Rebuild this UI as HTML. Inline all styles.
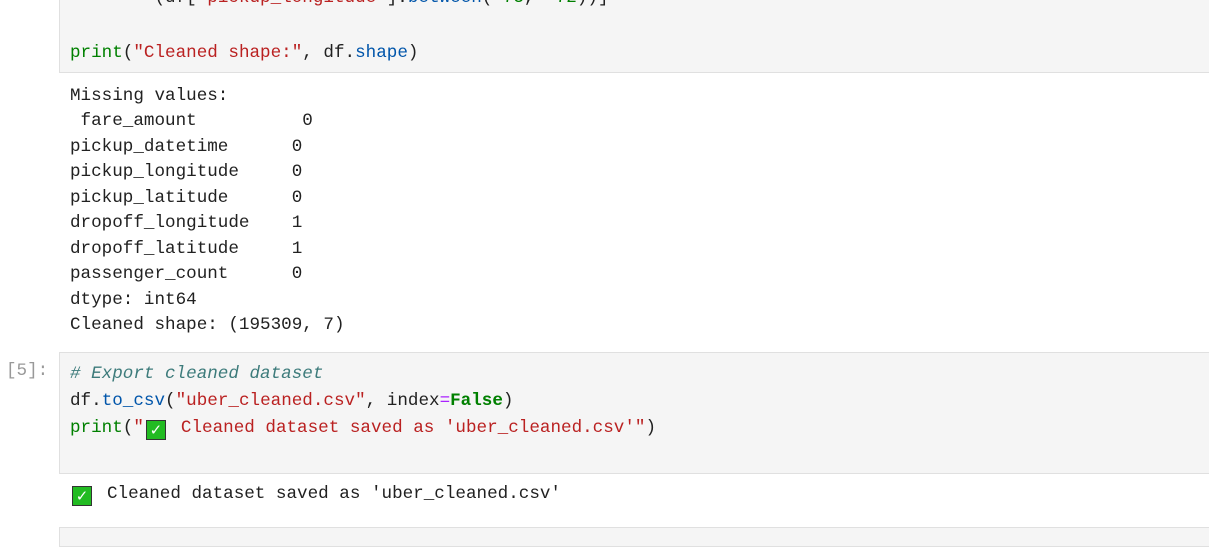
<!DOCTYPE html>
<html><head><style>
body{margin:0;width:1209px;height:532px;background:#fff;overflow:hidden;position:relative;font-family:"Liberation Mono","DejaVu Sans Mono",monospace;font-size:17.6px;color:#212121}
.box{position:absolute;left:59px;width:1160px;background:#f5f5f5;border:1px solid #e0e0e0;box-sizing:border-box}
.l{position:absolute;left:70px;white-space:pre;line-height:20px}
.s{color:#ba2121}.g{color:#008000}.b{color:#0055aa}.k{color:#008000;font-weight:bold}.p{color:#aa22ff}.c{color:#3d7b7b;font-style:italic}
.chk{display:inline-block;width:20px;height:20px;margin:0 15px 0 2px;background:#22bb22;border:1px solid #333;box-sizing:border-box;color:#fff;font-size:15px;line-height:18px;text-align:center;vertical-align:-3px;font-family:"DejaVu Sans",sans-serif}
</style></head><body>
<div class="box" style="top:-5px;height:78px"></div>
<div class="l" style="top:-12px">        (df[<span class="s">'pickup_longitude'</span>].<span class="b">between</span>(<span class="p">-</span><span class="g">75</span>, <span class="p">-</span><span class="g">72</span>))]</div>
<div class="l" style="top:43px"><span class="g">print</span>(<span class="s">"Cleaned shape:"</span>, df.<span class="b">shape</span>)</div>
<div class="l" style="top:84px;line-height:25.45px">Missing values:
 fare_amount          0
pickup_datetime      0
pickup_longitude     0
pickup_latitude      0
dropoff_longitude    1
dropoff_latitude     1
passenger_count      0
dtype: int64
Cleaned shape: (195309, 7)</div>
<div class="l" style="left:6px;top:361px;color:#999">[5]:</div>
<div class="box" style="top:352px;height:122px"></div>
<div class="l" style="top:361px;line-height:27px"><span class="c"># Export cleaned dataset</span>
df.<span class="b">to_csv</span>(<span class="s">"uber_cleaned.csv"</span>, index<span class="p">=</span><span class="k">False</span>)
<span class="g">print</span>(<span class="s">"<span class="chk">✓</span>Cleaned dataset saved as 'uber_cleaned.csv'"</span>)</div>
<div class="l" style="top:484px"><span class="chk">✓</span>Cleaned dataset saved as 'uber_cleaned.csv'</div>
<div class="box" style="top:527px;height:20px"></div>
</body></html>
